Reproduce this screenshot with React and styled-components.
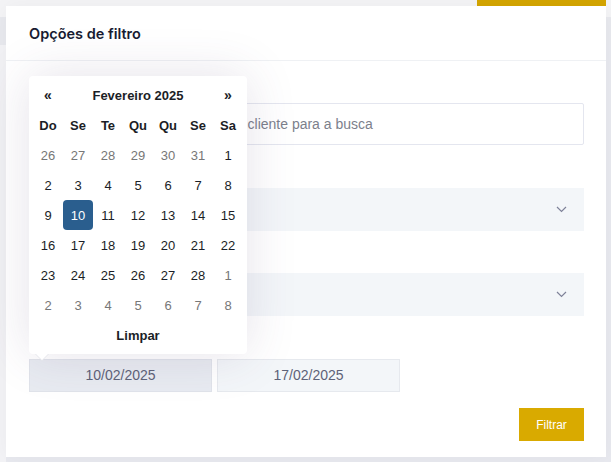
import React from 'react';
import styled, { createGlobalStyle } from 'styled-components';

const GlobalStyle = createGlobalStyle`
  * { box-sizing: border-box; }
  html, body { margin: 0; padding: 0; }
  body {
    font-family: "Liberation Sans", Arial, sans-serif;
    background: #f3f3f6;
  }
`;

const Page = styled.div`
  position: relative;
  width: 611px;
  height: 462px;
  overflow: hidden;
  display: grid;
  grid-template-rows: 17px 28px 1fr;
  background: linear-gradient(to right, #f3f3f6 0 6px, #e8e9ef 6px);
`;

const TopBar = styled.div`
  background: #f4f4f6;
  display: flex;
  justify-content: flex-end;
  padding-right: 5px;
`;

const PageButton = styled.div`
  width: 129px;
  height: 30px;
  background: #d4a500;
`;

const PageBand = styled.div`
  background: #e8e9ee;
`;

const Modal = styled.div`
  position: absolute;
  top: 6px;
  left: 6px;
  width: 600px;
  height: 451px;
  background: #fff;
  box-shadow: 0 0 20px rgba(0, 0, 0, 0.04);
  display: flex;
  flex-direction: column;
`;

const Header = styled.div`
  height: 55px;
  padding: 0 23px;
  display: flex;
  align-items: center;
  border-bottom: 1px solid #eff1f4;
`;

const Title = styled.h3`
  margin: 0;
  font-family: Inter, "Noto Sans", sans-serif;
  font-weight: 600;
  font-size: 14.5px;
  color: #181c32;
`;

const Body = styled.div`
  position: relative;
  flex: 1;
  padding: 20px 22px 0 23px;
  display: flex;
  flex-direction: column;
  gap: 20.5px;
`;

const Group = styled.div`
  display: flex;
  flex-direction: column;
`;

// label row sits under the open datepicker, so only its height shows
const LabelSpace = styled.div`
  height: 22px;
`;

const TextInput = styled.input`
  height: 42px;
  width: 100%;
  border: 1px solid #e4e6ef;
  border-radius: 2px;
  padding: 0 16px;
  font-family: "Liberation Sans", Arial, sans-serif;
  font-size: 14px;
  color: #3f4254;
  outline: none;
  &::placeholder { color: #7c7f8c; }
`;

const SelectBox = styled.div`
  height: 43px;
  background: #f3f6f9;
  display: flex;
  align-items: center;
  justify-content: flex-end;
  padding-right: 17px;
  color: #7e8299;
`;

const DateRow = styled.div`
  display: flex;
  gap: 5px;
`;

const DateField = styled.div`
  width: 183px;
  height: 33px;
  display: flex;
  align-items: center;
  justify-content: center;
  font-size: 14px;
  color: #5e6278;
  background: ${p => (p.$focused ? '#e8ebf1' : '#f3f6f9')};
  border: 1px solid ${p => (p.$focused ? '#e0e3ea' : '#e6e9ee')};
`;

const Footer = styled.div`
  display: flex;
  justify-content: flex-end;
  margin-top: -4px;
`;

const FilterButton = styled.button`
  width: 65px;
  height: 33px;
  border: 0;
  background: #d9aa00;
  color: #fff;
  font-family: "Liberation Sans", Arial, sans-serif;
  font-size: 12px;
  cursor: pointer;
`;

const Calendar = styled.div`
  position: absolute;
  top: 15px;
  left: 23px;
  width: 218px;
  padding: 4px;
  background: #fff;
  border-radius: 4px;
  box-shadow: 0 0 50px 0 rgba(82, 63, 105, 0.15);
  display: grid;
  grid-template-columns: repeat(7, 30px);
  grid-auto-rows: 30px;
  font-size: 13px;
  color: #1b1e26;

  &::before,
  &::after {
    content: '';
    position: absolute;
    left: 7px;
    border-left: 6px solid transparent;
    border-right: 6px solid transparent;
  }
  &::before {
    bottom: -7px;
    border-top: 7px solid #e6e7ec;
    left: 6px;
    border-left-width: 7px;
    border-right-width: 7px;
  }
  &::after {
    bottom: -6px;
    border-top: 6px solid #fff;
  }
`;

const NavCell = styled.div`
  display: flex;
  align-items: center;
  justify-content: center;
  font-weight: 700;
  font-size: 14px;
`;

const MonthTitle = styled.div`
  grid-column: span 5;
  display: flex;
  align-items: center;
  justify-content: center;
  font-weight: 700;
`;

const WeekDay = styled.div`
  display: flex;
  align-items: center;
  justify-content: center;
  font-weight: 700;
`;

const Day = styled.div`
  display: flex;
  align-items: center;
  justify-content: center;
  border-radius: 4px;
  color: ${p => (p.$active ? '#fff' : p.$muted ? '#777777' : '#1b1e26')};
  background: ${p => (p.$active ? '#2a5e8e' : 'transparent')};
`;

const ClearRow = styled.div`
  grid-column: span 7;
  display: flex;
  align-items: center;
  justify-content: center;
  font-weight: 700;
`;

const Chevron = () => (
  <svg width="11" height="7" viewBox="0 0 11 7" fill="none">
    <polyline points="1,1 5.5,5.5 10,1" stroke="currentColor" strokeWidth="1.2" />
  </svg>
);

const weekDays = ['Do', 'Se', 'Te', 'Qu', 'Qu', 'Se', 'Sa'];

const days = [
  ...[26, 27, 28, 29, 30, 31].map(d => ({ d, muted: true })),
  ...Array.from({ length: 28 }, (_, i) => ({ d: i + 1 })),
  ...[1, 2, 3, 4, 5, 6, 7, 8].map(d => ({ d, muted: true })),
];

function App() {
  return (
    <>
      <GlobalStyle />
      <Page>
        <TopBar>
          <PageButton />
        </TopBar>
        <PageBand />
        <div />
        <Modal>
          <Header>
            <Title>Opções de filtro</Title>
          </Header>
          <Body>
            <Group>
              <LabelSpace />
              <TextInput placeholder="Digite o nome ou CPF/CNPJ do cliente para a busca" />
            </Group>
            <Group>
              <LabelSpace />
              <SelectBox>
                <Chevron />
              </SelectBox>
            </Group>
            <Group>
              <LabelSpace />
              <SelectBox>
                <Chevron />
              </SelectBox>
            </Group>
            <Group>
              <LabelSpace />
              <DateRow>
                <DateField $focused>10/02/2025</DateField>
                <DateField>17/02/2025</DateField>
              </DateRow>
            </Group>
            <Footer>
              <FilterButton>Filtrar</FilterButton>
            </Footer>

            <Calendar>
              <NavCell>«</NavCell>
              <MonthTitle>Fevereiro 2025</MonthTitle>
              <NavCell>»</NavCell>
              {weekDays.map((w, i) => (
                <WeekDay key={i}>{w}</WeekDay>
              ))}
              {days.map((day, i) => (
                <Day key={i} $muted={day.muted} $active={!day.muted && day.d === 10}>
                  {day.d}
                </Day>
              ))}
              <ClearRow>Limpar</ClearRow>
            </Calendar>
          </Body>
        </Modal>
      </Page>
    </>
  );
}

export default App;
